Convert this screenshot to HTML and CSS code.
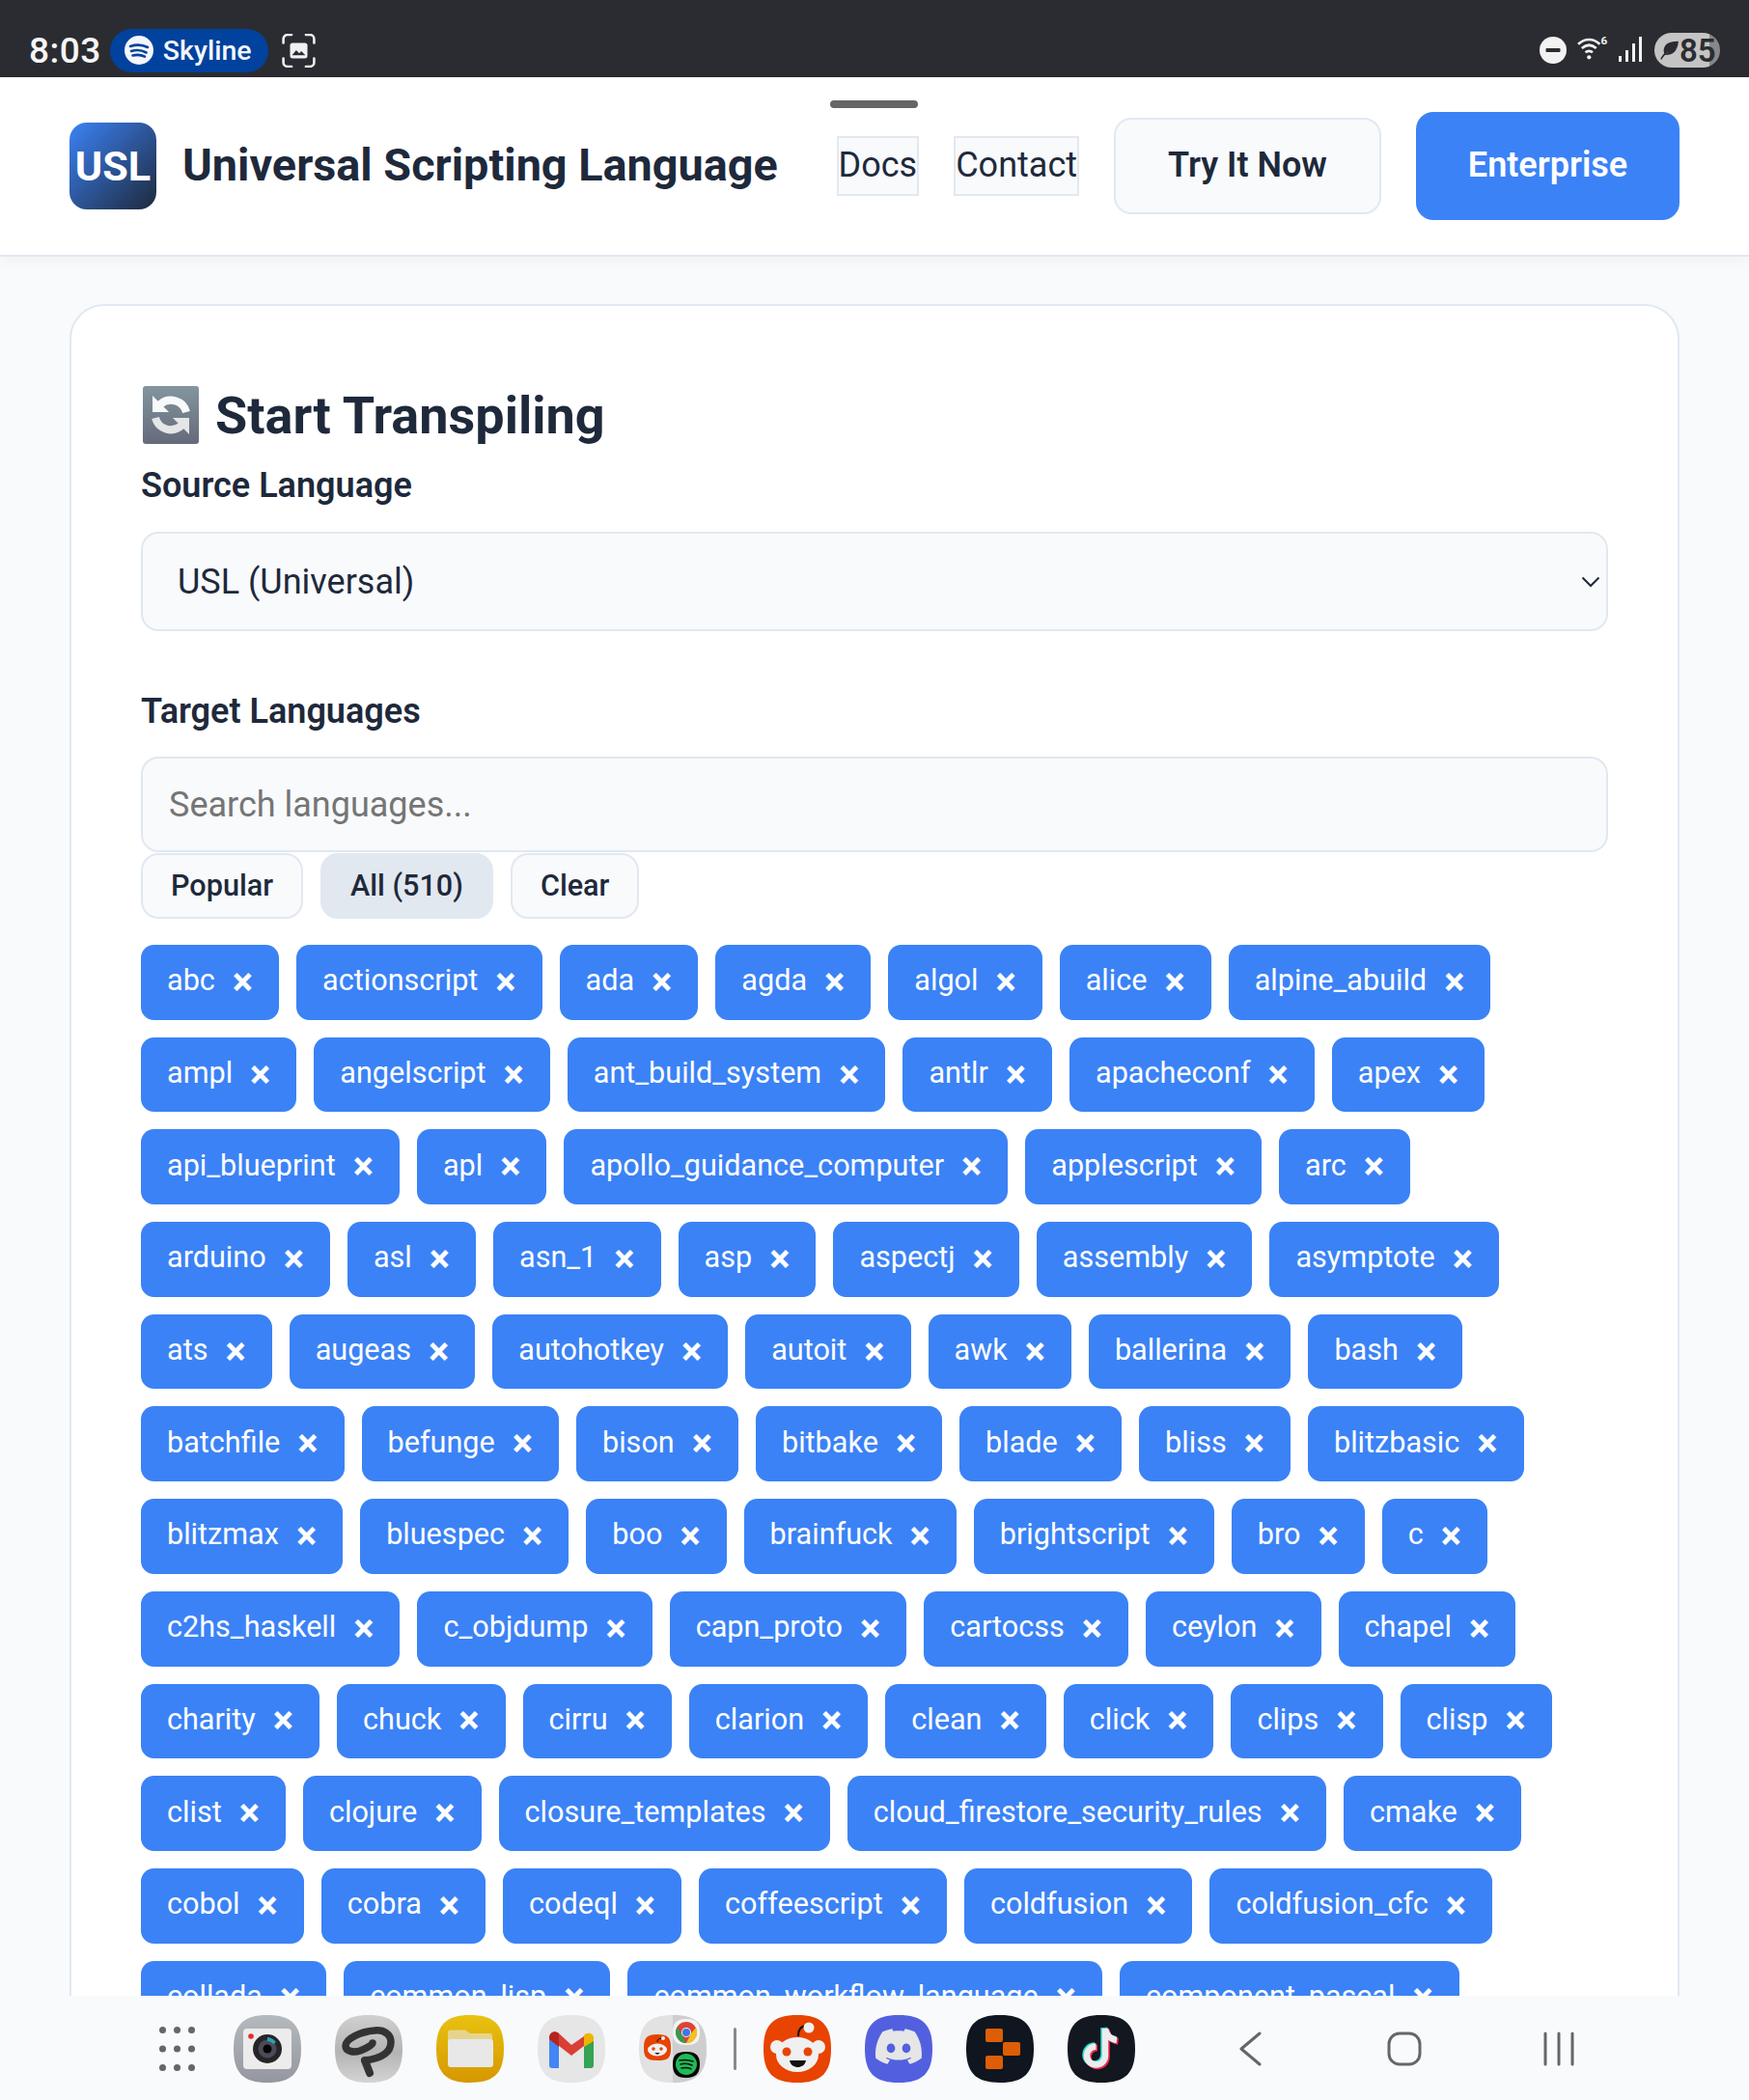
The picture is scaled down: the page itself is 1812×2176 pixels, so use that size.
FILE: index.html
```html
<!DOCTYPE html>
<html lang="en">
<head>
<meta charset="utf-8">
<title>Universal Scripting Language</title>
<link rel="stylesheet" href="styles.css">
</head>
<body>
<div class="statusbar">
  <div class="status-left">
    <span class="clock">8:03</span>
    <span class="media-pill">
      <svg class="spotify" viewBox="0 0 30 30"><circle cx="15" cy="15" r="15" fill="#f4f6fb"/><path d="M6 11c6-2 13-1.500 18 1M7 16c5-1.500 11-1 15.500 1.500M8.500 20.500c4-1 9-.7 12.500 1.200" fill="none" stroke="#00429d" stroke-width="2.600" stroke-linecap="round"/></svg>
      Skyline
    </span>
    <svg class="shot" viewBox="0 0 33 33"><path d="M1.500 9V5a4 4 0 0 1 4-4h4M23.500 1h4a4 4 0 0 1 4 4v4M31.500 24v4a4 4 0 0 1-4 4h-4M9.500 32h-4a4 4 0 0 1-4-4v-4" fill="none" stroke="#f2f2f2" stroke-width="2.400" stroke-linecap="round"/><rect x="8" y="9" width="17" height="15" rx="2.500" fill="#f2f2f2"/><path d="M10 21l4-5 3 3 2-2 4 4z" fill="#2b2c31"/></svg>
  </div>
  <div class="status-right">
    <svg class="dnd" viewBox="0 0 28 28"><circle cx="14" cy="14" r="14" fill="#f2f2f2"/><rect x="6.500" y="12" width="15" height="4" rx="1" fill="#2b2c31"/></svg>
    <svg class="wifi" viewBox="0 0 30 24"><path d="M1 9c6.500-6 14.500-6 21 0M4.500 13c4.500-4 9.500-4 14 0M8 17c2.500-2 4.500-2 7 0" fill="none" stroke="#f2f2f2" stroke-width="2.500"/><circle cx="11.500" cy="21.700" r="2" fill="#f2f2f2"/><text x="23" y="9.500" class="wifi-six">6</text></svg>
    <svg class="signal" viewBox="0 0 24 26"><rect x="0" y="20" width="3" height="6" fill="#f2f2f2"/><rect x="7" y="14" width="3" height="12" fill="#f2f2f2"/><rect x="14" y="7" width="3" height="19" fill="#f2f2f2"/><rect x="21" y="0" width="3" height="26" fill="#f2f2f2"/></svg>
    <span class="battery">
      <svg class="leaf" viewBox="0 0 22 24"><path d="M21 2C10 2 5 6 5 13c0 2 .5 3 1.500 4C15 17 20 11 21 2zM1 23c2-5 5-8 10-11" fill="#2b2c31" stroke="#2b2c31" stroke-width="1.600"/></svg>
      <span>85</span>
    </span>
  </div>
</div>

<header class="topbar">
  <div class="handle"></div>
  <div class="brand">
    <div class="logo">USL</div>
    <span class="brand-name">Universal Scripting Language</span>
  </div>
  <nav class="nav">
    <button class="nav-link">Docs</button>
    <button class="nav-link">Contact</button>
    <button class="btn-outline">Try It Now</button>
    <button class="btn-primary">Enterprise</button>
  </nav>
</header>

<main class="main">
  <section class="card">
    <h2 class="card-title">
      <svg class="emoji" viewBox="0 0 58 60">
        <defs><linearGradient id="emojiBg" x1="0" y1="0" x2="0" y2="1"><stop offset="0" stop-color="#82969f"/><stop offset="1" stop-color="#666a7a"/></linearGradient></defs>
        <rect width="58" height="60" rx="3" fill="url(#emojiBg)"/>
        <path d="M45 27A16.500 16.500 0 0 0 18 19" fill="none" stroke="#f8f9f9" stroke-width="8"/>
        <path d="M10 10v17h17z" fill="#f8f9f9"/>
        <path d="M13 33A16.500 16.500 0 0 0 40 41" fill="none" stroke="#e4e6e7" stroke-width="8"/>
        <path d="M48 50V33H31z" fill="#e4e6e7"/>
      </svg>
      <span>Start Transpiling</span>
    </h2>

    <label class="field-label">Source Language</label>
    <div class="select">
      <span>USL (Universal)</span>
      <svg class="chevron" viewBox="0 0 20 12"><path d="M1.500 1.500L10 10l8.500-8.500" fill="none" stroke="#1e293b" stroke-width="2"/></svg>
    </div>

    <label class="field-label target-label">Target Languages</label>
    <input class="search" type="text" placeholder="Search languages...">

    <div class="filters">
      <button class="filter">Popular</button>
      <button class="filter filter-active">All (510)</button>
      <button class="filter">Clear</button>
    </div>

    <div class="tags">
      <span class="tag">abc<b>×</b></span>
      <span class="tag">actionscript<b>×</b></span>
      <span class="tag">ada<b>×</b></span>
      <span class="tag">agda<b>×</b></span>
      <span class="tag">algol<b>×</b></span>
      <span class="tag">alice<b>×</b></span>
      <span class="tag">alpine_abuild<b>×</b></span>
      <span class="tag">ampl<b>×</b></span>
      <span class="tag">angelscript<b>×</b></span>
      <span class="tag">ant_build_system<b>×</b></span>
      <span class="tag">antlr<b>×</b></span>
      <span class="tag">apacheconf<b>×</b></span>
      <span class="tag">apex<b>×</b></span>
      <span class="tag">api_blueprint<b>×</b></span>
      <span class="tag">apl<b>×</b></span>
      <span class="tag">apollo_guidance_computer<b>×</b></span>
      <span class="tag">applescript<b>×</b></span>
      <span class="tag">arc<b>×</b></span>
      <span class="tag">arduino<b>×</b></span>
      <span class="tag">asl<b>×</b></span>
      <span class="tag">asn_1<b>×</b></span>
      <span class="tag">asp<b>×</b></span>
      <span class="tag">aspectj<b>×</b></span>
      <span class="tag">assembly<b>×</b></span>
      <span class="tag">asymptote<b>×</b></span>
      <span class="tag">ats<b>×</b></span>
      <span class="tag">augeas<b>×</b></span>
      <span class="tag">autohotkey<b>×</b></span>
      <span class="tag">autoit<b>×</b></span>
      <span class="tag">awk<b>×</b></span>
      <span class="tag">ballerina<b>×</b></span>
      <span class="tag">bash<b>×</b></span>
      <span class="tag">batchfile<b>×</b></span>
      <span class="tag">befunge<b>×</b></span>
      <span class="tag">bison<b>×</b></span>
      <span class="tag">bitbake<b>×</b></span>
      <span class="tag">blade<b>×</b></span>
      <span class="tag">bliss<b>×</b></span>
      <span class="tag">blitzbasic<b>×</b></span>
      <span class="tag">blitzmax<b>×</b></span>
      <span class="tag">bluespec<b>×</b></span>
      <span class="tag">boo<b>×</b></span>
      <span class="tag">brainfuck<b>×</b></span>
      <span class="tag">brightscript<b>×</b></span>
      <span class="tag">bro<b>×</b></span>
      <span class="tag">c<b>×</b></span>
      <span class="tag">c2hs_haskell<b>×</b></span>
      <span class="tag">c_objdump<b>×</b></span>
      <span class="tag">capn_proto<b>×</b></span>
      <span class="tag">cartocss<b>×</b></span>
      <span class="tag">ceylon<b>×</b></span>
      <span class="tag">chapel<b>×</b></span>
      <span class="tag">charity<b>×</b></span>
      <span class="tag">chuck<b>×</b></span>
      <span class="tag">cirru<b>×</b></span>
      <span class="tag">clarion<b>×</b></span>
      <span class="tag">clean<b>×</b></span>
      <span class="tag">click<b>×</b></span>
      <span class="tag">clips<b>×</b></span>
      <span class="tag">clisp<b>×</b></span>
      <span class="tag">clist<b>×</b></span>
      <span class="tag">clojure<b>×</b></span>
      <span class="tag">closure_templates<b>×</b></span>
      <span class="tag">cloud_firestore_security_rules<b>×</b></span>
      <span class="tag">cmake<b>×</b></span>
      <span class="tag">cobol<b>×</b></span>
      <span class="tag">cobra<b>×</b></span>
      <span class="tag">codeql<b>×</b></span>
      <span class="tag">coffeescript<b>×</b></span>
      <span class="tag">coldfusion<b>×</b></span>
      <span class="tag">coldfusion_cfc<b>×</b></span>
      <span class="tag">collada<b>×</b></span>
      <span class="tag">common_lisp<b>×</b></span>
      <span class="tag">common_workflow_language<b>×</b></span>
      <span class="tag">component_pascal<b>×</b></span>
    </div>
  </section>
</main>

<footer class="dock">
  <svg class="apps-grid" viewBox="0 0 37 46"><g fill="#666"><circle cx="3.500" cy="3.500" r="3.500"/><circle cx="18.500" cy="3.500" r="3.500"/><circle cx="33.500" cy="3.500" r="3.500"/><circle cx="3.500" cy="23" r="3.500"/><circle cx="18.500" cy="23" r="3.500"/><circle cx="33.500" cy="23" r="3.500"/><circle cx="3.500" cy="42.500" r="3.500"/><circle cx="18.500" cy="42.500" r="3.500"/><circle cx="33.500" cy="42.500" r="3.500"/></g></svg>
  <div class="dock-apps">
    <svg class="app" viewBox="0 0 70 70">
      <defs><linearGradient id="camBg" x1="0" y1="0" x2="0" y2="1"><stop offset="0" stop-color="#b4babd"/><stop offset="1" stop-color="#94979f"/></linearGradient></defs>
      <path d="M35 0C60 0 70 10 70 35S60 70 35 70 0 60 0 35 10 0 35 0Z" fill="url(#camBg)"/>
      <rect x="10" y="14" width="50" height="42" rx="4" fill="#ececec"/>
      <circle cx="35" cy="35" r="15" fill="#252527"/><circle cx="35" cy="35" r="9.500" fill="#4a4a58"/><path d="M35 23a12 12 0 0 1 9 5l-3 2a8 8 0 0 0-6-3z" fill="#2aa2b8"/><circle cx="35" cy="35" r="4.500" fill="#050505"/>
      <circle cx="18" cy="22" r="2.800" fill="#e62a2a"/>
    </svg>
    <svg class="app" viewBox="0 0 70 70">
      <defs><linearGradient id="clipBg" x1="0" y1="0" x2="0" y2="1"><stop offset="0" stop-color="#d0d0d0"/><stop offset=".55" stop-color="#b4b4b4"/><stop offset="1" stop-color="#d4d4d4"/></linearGradient></defs>
      <path d="M35 0C60 0 70 10 70 35S60 70 35 70 0 60 0 35 10 0 35 0Z" fill="url(#clipBg)"/>
      <path d="M31 47c16-2 27-8 27-19 0-8-7-13-17-12C28 17 11 24 11 32c0 6 9 7 15 5 5-2 13-6 13-8" fill="none" stroke="#333" stroke-width="7.500" stroke-linecap="round" stroke-linejoin="round"/>
      <path d="M31 47l5 13" fill="none" stroke="#333" stroke-width="8" stroke-linecap="round"/>
    </svg>
    <svg class="app" viewBox="0 0 70 70">
      <defs><linearGradient id="foldBg" x1="0" y1="0" x2="0" y2="1"><stop offset="0" stop-color="#e8c211"/><stop offset="1" stop-color="#d69700"/></linearGradient></defs>
      <path d="M35 0C60 0 70 10 70 35S60 70 35 70 0 60 0 35 10 0 35 0Z" fill="url(#foldBg)"/>
      <path d="M12 21v-3a2.500 2.500 0 0 1 2.500-2.500H30l5 3.500h20.500A2.500 2.500 0 0 1 58 21.500V28H12z" fill="#e6d48e"/>
      <rect x="12" y="25" width="47" height="29" rx="3" fill="#e8e8e8"/>
    </svg>
    <svg class="app" viewBox="0 0 70 70">
      <path d="M35 0C60 0 70 10 70 35S60 70 35 70 0 60 0 35 10 0 35 0Z" fill="#e6e6e6"/>
      <path d="M12 25h10v30h-7a3 3 0 0 1-3-3z" fill="#4285f4"/>
      <path d="M48 28l10-3v27a3 3 0 0 1-3 3h-7z" fill="#34a353"/>
      <path d="M12 24l23 18 13-10V22L35 31 22 19c-5-4-10-1-10 5z" fill="#d93f35"/>
      <path d="M12 24c0-6 6-8 10-5v14l-10-8z" fill="#b62420"/>
      <path d="M48 21c4-4 10-2 10 3v3l-10 6z" fill="#efb400"/>
    </svg>
    <svg class="app" viewBox="0 0 70 70">
      <path d="M35 0C60 0 70 10 70 35S60 70 35 70 0 60 0 35 10 0 35 0Z" fill="#e2e2e2"/>
      <path d="M35 0C60 0 70 10 70 35S60 70 35 70z" fill="#cecece"/>
      <path d="M19 20c11 0 14 3 14 14S30 47 19 47 5 44 5 34 8 20 19 20z" fill="#e64300"/>
      <ellipse cx="19" cy="36" rx="10" ry="6.500" fill="#f0f0f0"/><circle cx="15" cy="35" r="1.800" fill="#e64300"/><circle cx="23" cy="35" r="1.800" fill="#e64300"/><path d="M16 39h6l-3 2z" fill="#222"/>
      <path d="M19 28c0-3 2-4 5-4" fill="none" stroke="#111" stroke-width="1"/><circle cx="25" cy="24" r="2" fill="#f0f0f0"/>
      <path d="M49 4c10 0 14 4 14 14s-4 13-14 13-14-3-14-13S39 4 49 4z" fill="#f2f2f2"/>
      <circle cx="49" cy="18" r="11" fill="#db4437"/><path d="M59 13a11 11 0 0 1-10 16l5-10z" fill="#f2c21a"/><path d="M40 12l5 10 4 7a11 11 0 0 1-9-17z" fill="#2f9e4f"/><circle cx="49" cy="18" r="5" fill="#f2f2f2"/><circle cx="49" cy="18" r="4" fill="#3b78e7"/>
      <path d="M49 38c10 0 14 4 14 13s-4 14-14 14-14-4-14-14 4-13 14-13z" fill="#050505"/>
      <circle cx="49" cy="51" r="11" fill="#1fbb55"/><path d="M42 47c5-1 10-.5 14 1M43 51c4-1 9-.5 12 1M44 55c3-.7 7-.5 10 .8" fill="none" stroke="#111" stroke-width="1.500" stroke-linecap="round"/>
    </svg>
    <div class="dock-sep"></div>
    <svg class="app" viewBox="0 0 70 70">
      <path d="M35 0C60 0 70 10 70 35S60 70 35 70 0 60 0 35 10 0 35 0Z" fill="#e84300"/>
      <path d="M36 22c0-8 3-11 9-11" fill="none" stroke="#111" stroke-width="2"/>
      <circle cx="47" cy="13" r="5.500" fill="#f0f0f0"/>
      <circle cx="14" cy="33" r="7" fill="#f0f0f0"/><circle cx="57" cy="33" r="7" fill="#f0f0f0"/>
      <ellipse cx="35" cy="41" rx="22" ry="18" fill="#f0f0f0"/>
      <circle cx="24" cy="38" r="4.500" fill="#e84300"/><circle cx="46" cy="38" r="4.500" fill="#e84300"/>
      <path d="M27 47h17c-1 5-5 7-8.500 7S28 52 27 47z" fill="#111"/>
    </svg>
    <svg class="app" viewBox="0 0 70 70">
      <path d="M35 0C60 0 70 10 70 35S60 70 35 70 0 60 0 35 10 0 35 0Z" fill="#5260e0"/>
      <path transform="translate(11 8.500) scale(2)" d="M20.317 4.3698a19.7913 19.7913 0 00-4.8851-1.5152.0741.0741 0 00-.0785.0371c-.211.3753-.4447.8648-.6083 1.2495-1.8447-.2762-3.68-.2762-5.4868 0-.1636-.3933-.4058-.8742-.6177-1.2495a.077.077 0 00-.0785-.037 19.7363 19.7363 0 00-4.8852 1.515.0699.0699 0 00-.0321.0277C.5334 9.0458-.319 13.5799.0992 18.0578a.0824.0824 0 00.0312.0561c2.0528 1.5076 4.0413 2.4228 5.9929 3.0294a.0777.0777 0 00.0842-.0276c.4616-.6304.8731-1.2952 1.226-1.9942a.076.076 0 00-.0416-.1057c-.6528-.2476-1.2743-.5495-1.8722-.8923a.077.077 0 01-.0076-.1277c.1258-.0943.2517-.1923.3718-.2914a.0743.0743 0 01.0776-.0105c3.9278 1.7933 8.18 1.7933 12.0614 0a.0739.0739 0 01.0785.0095c.1202.099.246.1981.3728.2924a.077.077 0 01-.0066.1276 12.2986 12.2986 0 01-1.873.8914.0766.0766 0 00-.0407.1067c.3604.698.7719 1.3628 1.225 1.9932a.076.076 0 00.0842.0286c1.961-.6067 3.9495-1.5219 6.0023-3.0294a.077.077 0 00.0313-.0552c.5004-5.177-.8382-9.6739-3.5485-13.6604a.061.061 0 00-.0312-.0286zM8.02 15.3312c-1.1825 0-2.1569-1.0857-2.1569-2.419 0-1.3332.9555-2.4189 2.157-2.4189 1.2108 0 2.1757 1.0952 2.1568 2.419 0 1.3332-.9555 2.4189-2.1569 2.4189zm7.9748 0c-1.1825 0-2.1569-1.0857-2.1569-2.419 0-1.3332.9554-2.4189 2.1569-2.4189 1.2108 0 2.1757 1.0952 2.1568 2.419 0 1.3332-.946 2.4189-2.1568 2.4189Z" fill="#e6e6e6"/>
    </svg>
    <svg class="app" viewBox="0 0 70 70">
      <path d="M35 0C60 0 70 10 70 35S60 70 35 70 0 60 0 35 10 0 35 0Z" fill="#10161f"/>
      <rect x="20" y="14" width="18" height="14" rx="2" fill="#dd5e06"/><rect x="38" y="28" width="18" height="14" rx="2" fill="#dd5e06"/><rect x="20" y="42" width="18" height="14" rx="2" fill="#dd5e06"/>
    </svg>
    <svg class="app" viewBox="0 0 70 70">
      <path d="M35 0C60 0 70 10 70 35S60 70 35 70 0 60 0 35 10 0 35 0Z" fill="#13171f"/>
      <g fill="none" stroke-width="6.500">
        <path d="M39 14v28a9.500 9.500 0 1 1-9.500-9.500M39 14c1 6 5 11 12 12" stroke="#2ad9d4" transform="translate(-1.500 -1)"/>
        <path d="M39 14v28a9.500 9.500 0 1 1-9.500-9.500M39 14c1 6 5 11 12 12" stroke="#ee2a52" transform="translate(1.500 1.500)"/>
        <path d="M39 14v28a9.500 9.500 0 1 1-9.500-9.500M39 14c1 6 5 11 12 12" stroke="#ececec"/>
      </g>
    </svg>
  </div>
  <div class="dock-nav">
    <svg class="nav-back" viewBox="0 0 23 36"><path d="M21 2L2 18l19 16" fill="none" stroke="#666" stroke-width="3" stroke-linecap="round" stroke-linejoin="round"/></svg>
    <svg class="nav-home" viewBox="0 0 36 36"><rect x="2" y="2" width="32" height="32" rx="11" fill="none" stroke="#666" stroke-width="3"/></svg>
    <svg class="nav-recent" viewBox="0 0 32 36"><path d="M2 2v32M16 2v32M30 2v32" fill="none" stroke="#666" stroke-width="3" stroke-linecap="round"/></svg>
  </div>
</footer>
</body>
</html>
```
FILE: styles.css
```css
* { box-sizing: border-box; }
html, body { height: 100%; overflow: hidden; }
body {
  margin: 0;
  background: #f8fafc;
  color: #1e293b;
  font-family: Roboto, "Liberation Sans", sans-serif;
  display: flex;
  flex-direction: column;
}
button { font-family: inherit; color: inherit; }

.statusbar {
  flex: none;
  height: 80px;
  background: #2b2c31;
  display: flex;
  justify-content: space-between;
  align-items: center;
  padding: 24px 30px 0;
}
.status-left, .status-right { display: flex; align-items: center; }
.clock { color: #f6f6f6; font-size: 37px; font-weight: 500; letter-spacing: .5px; }
.media-pill {
  margin-left: 9px;
  height: 45px;
  width: 164px;
  border-radius: 23px;
  background: #00429d;
  color: #f4f6fb;
  font-size: 28.500px;
  font-weight: 500;
  display: flex;
  align-items: center;
  gap: 10px;
  padding-left: 15px;
}
.spotify { width: 30px; height: 30px; }
.shot { width: 35px; height: 35px; margin-left: 14px; }
.status-right { color: #f2f2f2; }
.dnd { width: 28px; height: 28px; }
.wifi { width: 32px; height: 26px; margin-left: 11px; margin-top: -6px; }
.wifi-six { font-size: 11px; font-weight: 700; fill: #f2f2f2; font-family: Roboto, sans-serif; }
.signal { width: 24px; height: 26px; margin-left: 11px; margin-top: -2px; }
.battery {
  margin-left: 13px;
  width: 68px;
  height: 36px;
  border-radius: 18px;
  background: linear-gradient(90deg, #c4c4c4 84%, #888 84%);
  color: #2b2c31;
  font-size: 33px;
  font-weight: 600;
  display: flex;
  align-items: center;
  padding-left: 6px;
  gap: 1px;
}
.leaf { width: 19px; height: 22px; }

.topbar {
  flex: none;
  position: relative;
  height: 186px;
  background: #fff;
  border-bottom: 2px solid #e2e8f0;
  box-shadow: 0 4px 14px rgba(0, 0, 0, .04);
  display: flex;
  justify-content: space-between;
  align-items: center;
  padding: 0 72px;
}
.handle {
  position: absolute;
  left: 860px;
  top: 24px;
  width: 91px;
  height: 8px;
  border-radius: 4px;
  background: #666;
}
.brand { display: flex; align-items: center; gap: 27px; }
.logo {
  width: 90px;
  height: 90px;
  border-radius: 18px;
  background: linear-gradient(135deg, #3b82f6, #1e293b);
  color: #fff;
  font-size: 43.200px;
  font-weight: 700;
  display: flex;
  align-items: center;
  justify-content: center;
}
.brand-name { font-size: 46.800px; font-weight: 700; color: #1e293b; padding-bottom: 3px; }
.nav { display: flex; align-items: center; gap: 36px; }
.nav-link {
  height: 62px;
  padding: 0 0 2px;
  font-size: 36px;
  background: #f8fafc;
  border: 2px solid #e2e8f0;
}
.btn-outline {
  width: 277px;
  height: 100px;
  padding: 0 0 2px;
  border-radius: 18px;
  background: #f8fafc;
  border: 2px solid #e2e8f0;
  font-size: 36px;
  font-weight: 600;
}
.btn-primary {
  width: 273px;
  height: 112px;
  padding: 0 0 2px;
  border-radius: 18px;
  background: #3b82f6;
  border: 0;
  color: #fff;
  font-size: 36px;
  font-weight: 600;
}

.main { flex: 1; min-height: 0; overflow: hidden; padding: 49px 72px 0; }
.card {
  background: #fff;
  border: 2px solid #e2e8f0;
  border-radius: 36px;
  padding: 72px;
}
.card-title {
  display: flex;
  align-items: center;
  gap: 17px;
  margin: 9px 0 0;
  height: 64px;
  font-size: 54px;
  font-weight: 700;
  color: #1e293b;
}
.emoji { width: 58px; height: 60px; margin-left: 2px; }
.field-label {
  display: block;
  margin-top: 14px;
  font-size: 36px;
  font-weight: 600;
  line-height: 54px;
  color: #1e293b;
}
.select {
  margin-top: 21px;
  height: 103px;
  display: flex;
  justify-content: space-between;
  align-items: center;
  padding: 0 6px 0 36px;
  background: #f8fafc;
  border: 2px solid #e2e8f0;
  border-radius: 18px;
  font-size: 36px;
}
.chevron { width: 20px; height: 12px; }
.target-label { margin-top: 56px; }
.search {
  display: block;
  width: 100%;
  height: 99px;
  margin-top: 20px;
  padding: 0 27px;
  background: #f8fafc;
  border: 2px solid #e2e8f0;
  border-radius: 18px;
  font-family: inherit;
  font-size: 36px;
  color: #1e293b;
}
.search::placeholder { color: #757575; opacity: 1; }
.filters { display: flex; gap: 18px; margin-top: 1px; }
.filter {
  height: 68px;
  padding: 0 29px 2px;
  background: #f8fafc;
  border: 2px solid #e2e8f0;
  border-radius: 18px;
  font-size: 30.600px;
  font-weight: 500;
}
.filter-active { background: #e2e8f0; }
.tags { display: flex; flex-wrap: wrap; gap: 18px; margin-top: 27px; }
.tag {
  height: 77.700px;
  display: flex;
  align-items: center;
  padding: 0 27px 4px;
  background: #3b82f6;
  border-radius: 13.500px;
  color: #fff;
  font-size: 30.600px;
}
.tag b { font-size: 40px; font-weight: 700; margin: 4px 0 0 18px; line-height: 1; }

.dock {
  position: fixed;
  left: 0;
  right: 0;
  bottom: 0;
  height: 108px;
  background: #f8fafc;
  display: flex;
  align-items: center;
  padding: 2px 0 0 165px;
}
.apps-grid { width: 37px; height: 46px; margin-right: 40px; }
.dock-apps { display: flex; align-items: center; gap: 35px; }
.app { width: 70px; height: 70px; }
.dock-sep { width: 3px; height: 44px; margin: 0 -7px; background: #8a8a8a; border-radius: 2px; }
.dock-nav { display: flex; align-items: center; margin-left: 108px; }
.nav-back { width: 23px; height: 36px; }
.nav-home { width: 36px; height: 36px; margin-left: 130px; }
.nav-recent { width: 32px; height: 36px; margin-left: 126px; }
```
